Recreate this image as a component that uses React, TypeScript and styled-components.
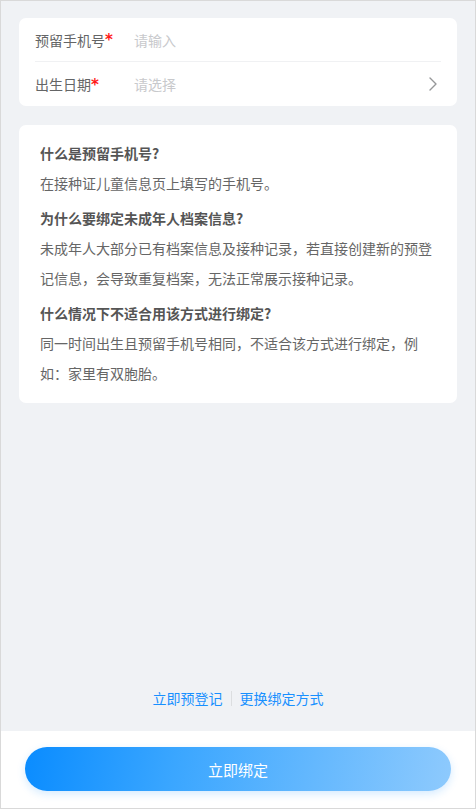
import React from "react";
import styled, { createGlobalStyle } from "styled-components";

const Global = createGlobalStyle`
  html, body { margin: 0; padding: 0; background: #f0f2f5; }
  * { box-sizing: border-box; }
  body { font-family: "Noto Sans CJK SC", "Noto Sans", sans-serif; }
`;

const Page = styled.div`
  min-height: 809px;
  border: 1px solid #d9d9d9;
  background: #f0f2f5;
  display: flex;
  flex-direction: column;
`;

const Content = styled.div`
  flex: 1;
  display: flex;
  flex-direction: column;
  padding: 17px 18px 0;
  gap: 19px;
`;

const Card = styled.div`
  background: #fff;
  border-radius: 7px;
`;

const FormRow = styled.div<{ $divider?: boolean }>`
  height: 44px;
  margin: 0 16px;
  display: flex;
  align-items: center;
  font-size: 14px;
  border-bottom: ${(p) => (p.$divider ? "1px solid #f0f1f3" : "none")};
`;

const Label = styled.div`
  width: 99px;
  color: #646566;
  flex-shrink: 0;
  display: flex;
  align-items: center;
`;

const Star = styled.span`
  color: #ff1a1a;
  font-family: "DejaVu Sans", sans-serif;
  font-size: 15px;
  font-weight: 700;
  line-height: 1;
  margin-top: 2px;
`;

const Placeholder = styled.div`
  flex: 1;
  color: #c8c9cc;
`;

const Chevron = styled.svg`
  width: 8px;
  height: 14px;
  margin-right: 4px;
`;

const InfoCard = styled(Card)`
  padding: 13px 21px 15px;
`;

const Title = styled.div<{ $first?: boolean }>`
  font-size: 14px;
  font-weight: 700;
  line-height: 30px;
  color: #555;
  margin-top: ${(p) => (p.$first ? "0" : "5px")};
`;

const Text = styled.div`
  font-size: 14px;
  line-height: 30px;
  color: #666;
`;

const Spacer = styled.div`
  flex: 1;
`;

const Links = styled.div`
  display: flex;
  justify-content: center;
  align-items: center;
  font-size: 14px;
  line-height: 20px;
  color: #1890ff;
  margin-bottom: 23px;
`;

const Sep = styled.span`
  width: 1px;
  height: 15px;
  background: #dcdee0;
  margin: 0 8px;
`;

const BottomBar = styled.div`
  background: #fff;
  padding: 16px 24px 17px;
`;

const Button = styled.button`
  width: 100%;
  height: 44px;
  border: none;
  border-radius: 22px;
  background: linear-gradient(100deg, #0a8cff 0%, #3aa6ff 35%, #8ecafd 100%);
  box-shadow: 0 3px 8px rgba(24, 144, 255, 0.18);
  color: #fff;
  font-size: 15px;
  font-family: inherit;
`;

export default function App() {
  return (
    <>
      <Global />
      <Page>
        <Content>
          <Card>
            <FormRow $divider>
              <Label>
                预留手机号<Star>*</Star>
              </Label>
              <Placeholder>请输入</Placeholder>
            </FormRow>
            <FormRow>
              <Label>
                出生日期<Star>*</Star>
              </Label>
              <Placeholder>请选择</Placeholder>
              <Chevron viewBox="0 0 8 14" fill="none">
                <path d="M1 1l6 6-6 6" stroke="#969799" strokeWidth="1.4" strokeLinecap="round" strokeLinejoin="round" />
              </Chevron>
            </FormRow>
          </Card>
          <InfoCard>
            <Title $first>什么是预留手机号?</Title>
            <Text>在接种证儿童信息页上填写的手机号。</Text>
            <Title>为什么要绑定未成年人档案信息?</Title>
            <Text>
              未成年人大部分已有档案信息及接种记录，若直接创建新的预登记信息，会导致重复档案，无法正常展示接种记录。
            </Text>
            <Title>什么情况下不适合用该方式进行绑定?</Title>
            <Text>同一时间出生且预留手机号相同，不适合该方式进行绑定，例如：家里有双胞胎。</Text>
          </InfoCard>
          <Spacer />
          <Links>
            <span>立即预登记</span>
            <Sep />
            <span>更换绑定方式</span>
          </Links>
        </Content>
        <BottomBar>
          <Button>立即绑定</Button>
        </BottomBar>
      </Page>
    </>
  );
}
